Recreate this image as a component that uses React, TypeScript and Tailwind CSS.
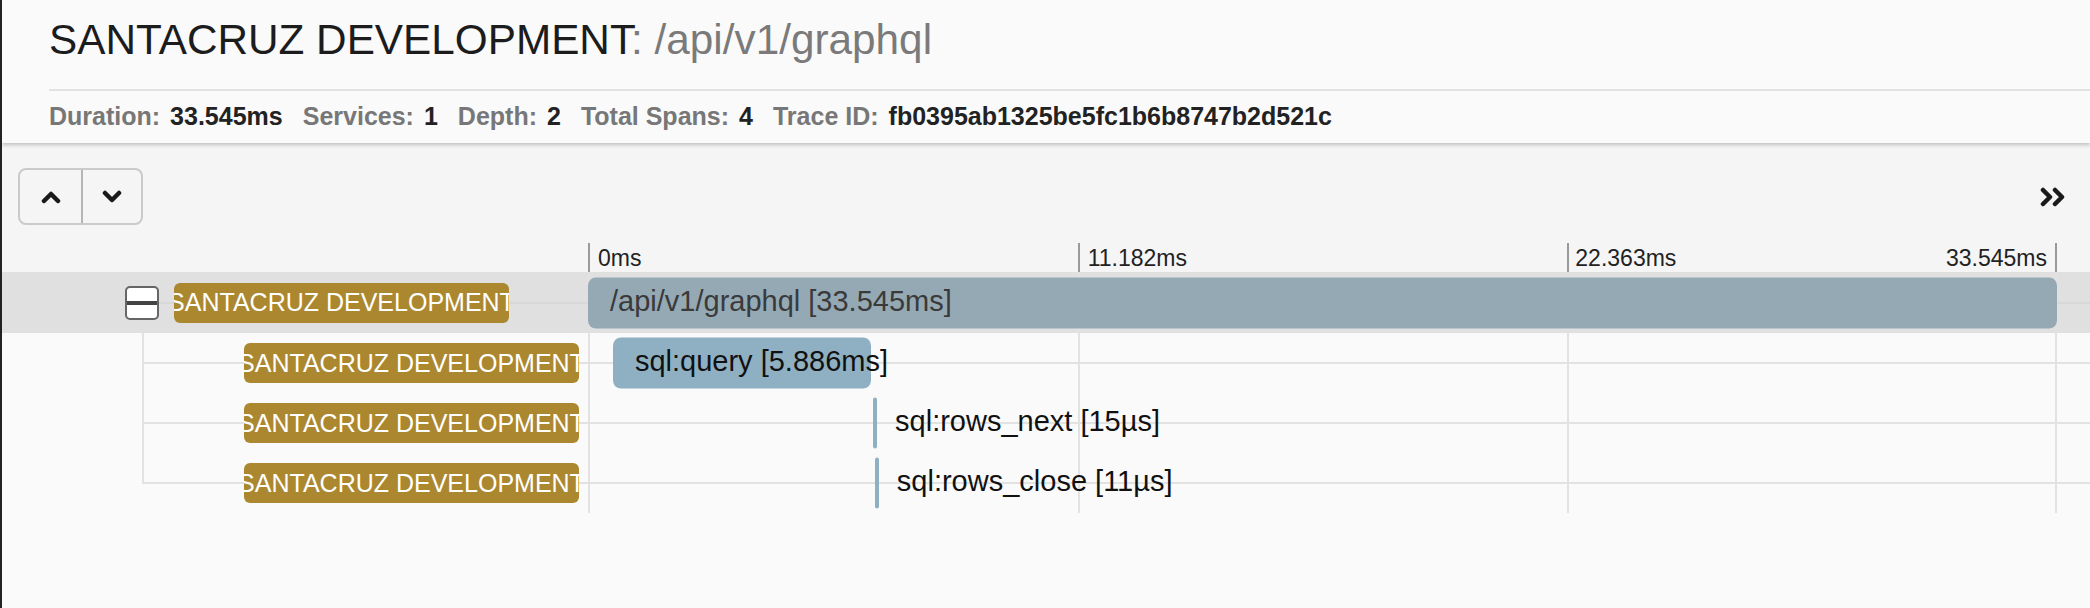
const TOTAL = 33.545

type Span = {
  id: string
  label: string
  start: number
  ms: number
  depth: number
}

const spans: Span[] = [
  { id: 'root', label: '/api/v1/graphql [33.545ms]', start: 0, ms: 33.545, depth: 0 },
  { id: 'query', label: 'sql:query [5.886ms]', start: 0.57, ms: 5.886, depth: 1 },
  { id: 'next', label: 'sql:rows_next [15µs]', start: 6.51, ms: 0.015, depth: 1 },
  { id: 'close', label: 'sql:rows_close [11µs]', start: 6.55, ms: 0.011, depth: 1 },
]

const stats: [string, string][] = [
  ['Duration:', '33.545ms'],
  ['Services:', '1'],
  ['Depth:', '2'],
  ['Total Spans:', '4'],
  ['Trace ID:', 'fb0395ab1325be5fc1b6b8747b2d521c'],
]

function Chevron({ dir }: { dir: 'up' | 'down' }) {
  return (
    <svg width="20" height="14" viewBox="0 0 20 14" fill="none">
      <polyline
        points={dir === 'up' ? '3,11 10,4 17,11' : '3,3 10,10 17,3'}
        stroke="#1a1a1a"
        strokeWidth="4.5"
        strokeLinecap="round"
        strokeLinejoin="round"
      />
    </svg>
  )
}

function DoubleRight() {
  return (
    <svg width="27" height="20" viewBox="0 0 27 20" fill="none">
      <polyline points="3,3 10,10 3,17" stroke="#1a1a1a" strokeWidth="4.5" strokeLinecap="round" strokeLinejoin="round" />
      <polyline points="15,3 22,10 15,17" stroke="#1a1a1a" strokeWidth="4.5" strokeLinecap="round" strokeLinejoin="round" />
    </svg>
  )
}

function ServicePill() {
  return (
    <div className="relative flex h-[40px] w-[335px] shrink-0 items-center justify-center overflow-hidden whitespace-nowrap rounded-[6px] bg-[#ab882f] text-[25px] leading-none text-white">
      SANTACRUZ DEVELOPMENT
    </div>
  )
}

function Row({ span, first }: { span: Span; first: boolean }) {
  const left = (span.start / TOTAL) * 100
  const width = (span.ms / TOTAL) * 100
  return (
    <div className={`relative flex ${first ? 'h-[61px] bg-[#e0e0e0]' : 'h-[60px]'}`}>
      {/* connector line through the row */}
      <div
        className={`absolute right-0 top-1/2 h-[2px] -translate-y-1/2 ${first ? 'left-[157px] bg-[#d8d8d8]' : 'left-[140px] bg-[#e2e2e2]'}`}
      />
      <div className={`flex w-[586px] shrink-0 items-center ${first ? 'pl-[123px]' : 'pl-[242px]'}`}>
        {first && (
          <div className="relative mr-[15px] flex h-[34px] w-[34px] shrink-0 flex-col justify-center overflow-hidden rounded-[5px] border-2 border-[#666] bg-white">
            <div className="h-[4px] w-full bg-[#444]" />
          </div>
        )}
        <ServicePill />
      </div>
      <div className="relative w-[1469px] shrink-0">
        <div className="grid h-full grid-cols-3">
          <div className="border-l-2 border-[#e2e2e2]" />
          <div className="border-l-2 border-[#e2e2e2]" />
          <div className="border-x-2 border-[#e2e2e2]" />
        </div>
        <div
          className={`absolute top-1/2 h-[51px] min-w-[4px] -translate-y-1/2 ${span.ms < 1 ? 'rounded-full' : 'rounded-[8px]'} ${first ? 'bg-[#95a9b5]' : 'bg-[#8fb0c3]'}`}
          style={{ left: `${left}%`, width: `${width}%` }}
        />
        <div
          className={`absolute top-1/2 -mt-[2px] -translate-y-1/2 whitespace-nowrap pl-[22px] text-[29px] leading-none ${first ? 'text-[#3a3a3a]' : 'text-[#111]'}`}
          style={{ left: `${left}%` }}
        >
          {span.label}
        </div>
      </div>
      <div className="flex-1" />
    </div>
  )
}

export default function App() {
  return (
    <div className="min-h-[608px] overflow-hidden border-l-2 border-[#222] bg-[#fafafa] font-['Liberation_Sans',Arial,sans-serif]">
      <header className="relative z-20 bg-[#fafafa] pl-[47px] shadow-[0_2px_4px_rgba(0,0,0,0.22)]">
        <h1 className="h-[89px] whitespace-nowrap pt-[19px] text-[42.3px] leading-none text-[#1c1c1c]">
          SANTACRUZ DEVELOPMENT<span className="text-[#7a7a7a]">: /api/v1/graphql</span>
        </h1>
        <div className="flex h-[54px] items-center gap-[20px] border-t-2 border-[#e2e2e2] text-[25px] font-bold whitespace-nowrap">
          {stats.map(([k, v]) => (
            <span key={k} className="flex items-center gap-[10px]">
              <span className="text-[#777]">{k}</span>
              <span className="text-[#222]">{v}</span>
            </span>
          ))}
        </div>
      </header>

      <div className="bg-[#f5f5f5]">
        <div className="flex items-center justify-between pl-[16px] pr-[23px] pt-[25px]">
          <div className="flex h-[57px] w-[125px] overflow-hidden rounded-[8px] border-2 border-[#cacaca]">
            <button type="button" className="flex w-[63px] items-center justify-center border-r-2 border-[#b5b5b5]">
              <Chevron dir="up" />
            </button>
            <button type="button" className="flex flex-1 items-center justify-center">
              <Chevron dir="down" />
            </button>
          </div>
          <DoubleRight />
        </div>

        <div className="mt-[18px] flex h-[29px]">
          <div className="w-[586px] shrink-0" />
          <div className="grid w-[1469px] shrink-0 grid-cols-3 text-[23px] leading-none text-[#222]">
            <div className="border-l-2 border-[#9a9a9a] pl-[8px] pt-[4px]">0ms</div>
            <div className="border-l-2 border-[#9a9a9a] pl-[8px] pt-[4px]">11.182ms</div>
            <div className="flex justify-between border-x-2 border-[#9a9a9a] pl-[6px] pr-[8px] pt-[4px]">
              <span>22.363ms</span>
              <span>33.545ms</span>
            </div>
          </div>
          <div className="flex-1" />
        </div>
      </div>

      <div className="relative">
        {/* tree trunk from the root toggle down to the last child */}
        <div className="absolute left-[140px] top-[49px] z-0 h-[163px] w-[2px] bg-[#e2e2e2]" />
        {spans.map((s, i) => (
          <Row key={s.id} span={s} first={i === 0} />
        ))}
      </div>
    </div>
  )
}
